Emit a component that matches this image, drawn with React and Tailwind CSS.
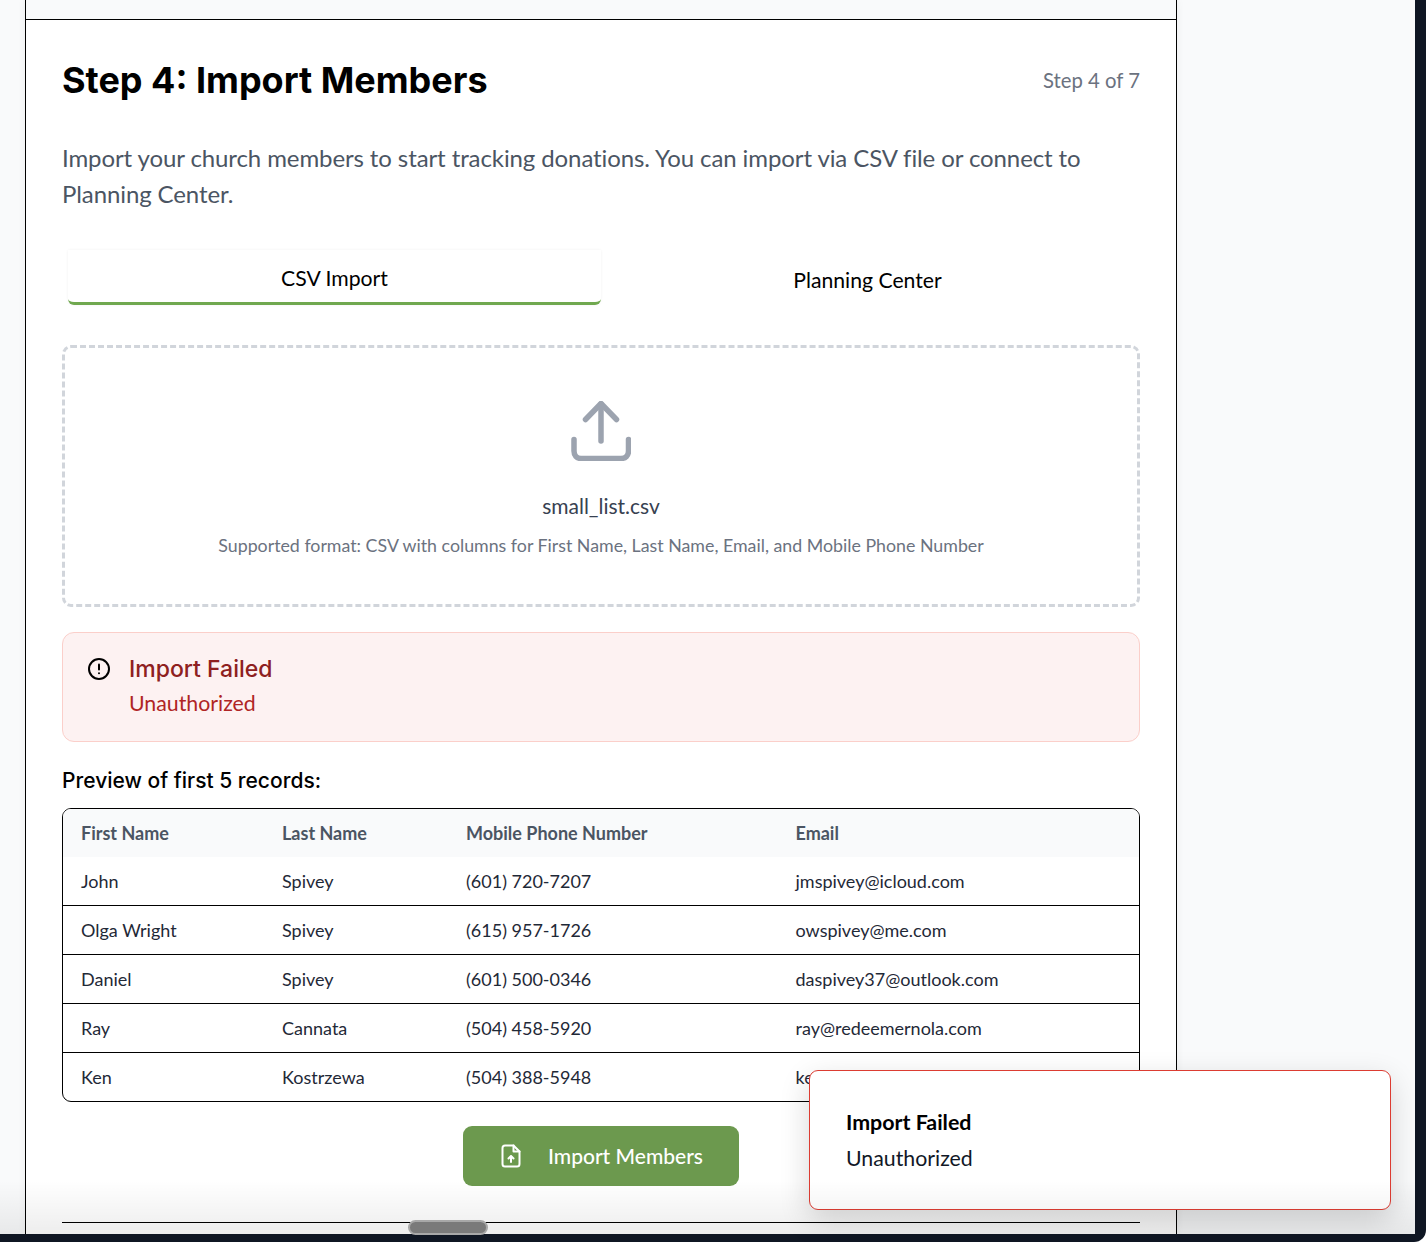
const rows = [
  ["John", "Spivey", "(601) 720-7207", "jmspivey@icloud.com"],
  ["Olga Wright", "Spivey", "(615) 957-1726", "owspivey@me.com"],
  ["Daniel", "Spivey", "(601) 500-0346", "daspivey37@outlook.com"],
  ["Ray", "Cannata", "(504) 458-5920", "ray@redeemernola.com"],
  ["Ken", "Kostrzewa", "(504) 388-5948", "ken@example.com"],
];

function UploadIcon() {
  return (
    <svg width="60" height="60" viewBox="0 0 60 60" fill="none" stroke="#9ca3af" strokeWidth="5.5" strokeLinecap="round" strokeLinejoin="round">
      <path d="M14.5 18.5L30 2.5L45.5 18.5" />
      <path d="M30 3V40" />
      <path d="M3 38.5V50C3 54.5 5.5 57.5 10 57.5H50C54.5 57.5 57.5 54.5 57.5 50V38.5" />
    </svg>
  );
}

function AlertIcon() {
  return (
    <svg width="24" height="24" viewBox="0 0 24 24" fill="none" stroke="#000" strokeWidth="2" strokeLinecap="round">
      <circle cx="12" cy="12" r="10" />
      <path d="M12 7.5V12.5" />
      <path d="M12 16.2V16.3" />
    </svg>
  );
}

function FileIcon() {
  return (
    <svg width="20" height="24" viewBox="0 0 20 24" fill="none" stroke="#fff" strokeWidth="2" strokeLinecap="round" strokeLinejoin="round">
      <path d="M12.5 1.5H4C2.3 1.5 1.5 2.5 1.5 4V20C1.5 21.5 2.3 22.5 4 22.5H16C17.7 22.5 18.5 21.5 18.5 20V7.5L12.5 1.5Z" />
      <path d="M12.5 1.5V7.5H18.5" />
      <path d="M10 18V12.5" />
      <path d="M7.5 14.5L10 12L12.5 14.5" />
    </svg>
  );
}

export default function App() {
  return (
    <div className="relative w-[1426px] h-[1242px] overflow-hidden bg-white font-['Lato',sans-serif]">
      <div className="h-full w-full rounded-br-[12px] bg-[#0f1623]">
        <div className="w-[1415px] h-[1234px] overflow-hidden bg-[#f9fafb] pl-[25px]">
          <div className="w-[1152px] h-[1234px] border-x border-black bg-white shadow-[0_0_8px_rgba(0,0,0,0.06)]">
            <div className="h-5 border-b border-black bg-[#f9fafb]" />
            <div className="px-9 pt-10">
              <div className="flex items-center justify-between h-10">
                <h1 className="font-['Inter',sans-serif] text-[36px] leading-10 font-bold text-black">Step 4: Import Members</h1>
                <span className="text-[20.3px] text-[#6b7280]">Step 4 of 7</span>
              </div>
              <p className="mt-10 text-[24px] leading-9 tracking-[-0.1px] text-[#4b5563]">
                Import your church members to start tracking donations. You can import via CSV file or connect to Planning Center.
              </p>
              <div className="mt-[38px] grid grid-cols-2 gap-0 px-[6px] text-[21.2px] text-black">
                <div className="flex h-[55px] items-center justify-center rounded-b-[6px] border-b-[3px] border-[#70a84f] bg-white pt-[6px] shadow-[0_0_3px_rgba(0,0,0,0.06)]">CSV Import</div>
                <div className="flex h-[55px] items-center justify-center pt-[6px]">Planning Center</div>
              </div>
              <div className="mt-10 flex h-[262px] flex-col items-center rounded-[9px] border-[3px] border-dashed border-[#d1d5db] pt-[53px]">
                <UploadIcon />
                <div className="mt-[31px] text-[21px] leading-7 text-[#374151]">small_list.csv</div>
                <div className="mt-[13px] text-[17.8px] leading-6 text-[#6b7280]">Supported format: CSV with columns for First Name, Last Name, Email, and Mobile Phone Number</div>
              </div>
              <div className="mt-[25px] flex h-[110px] gap-[18px] rounded-[12px] border border-[#fbcfca] bg-[#fdf2f2] pl-6 pt-[22px]">
                <div className="pt-[2px]"><AlertIcon /></div>
                <div>
                  <div className="font-['Inter',sans-serif] text-[23px] leading-7 font-medium text-[#8e2020]">Import Failed</div>
                  <div className="mt-[6px] text-[21.3px] leading-7 text-[#b02525]">Unauthorized</div>
                </div>
              </div>
              <h2 className="mt-[25px] font-['Inter',sans-serif] text-[21px] leading-7 font-medium text-black">Preview of first 5 records:</h2>
              <div className="mt-[13px] overflow-hidden rounded-[9px] border border-black">
                <div className="grid h-12 grid-cols-[201px_184px_329.5px_1fr] items-center bg-[#f9fafb] pl-[18px] text-[18px] font-bold text-[#4b5563]">
                  <span>First Name</span>
                  <span>Last Name</span>
                  <span>Mobile Phone Number</span>
                  <span>Email</span>
                </div>
                {rows.map((r, i) => (
                  <div key={r[0]} className={i < 4
                    ? "grid h-[49px] grid-cols-[201px_184px_329.5px_1fr] items-center border-b border-black pl-[18px] text-[18px] text-[#1f2937]"
                    : "grid h-[48px] grid-cols-[201px_184px_329.5px_1fr] items-center pl-[18px] text-[18px] text-[#1f2937]"}>
                    {r.map((c) => <span key={c}>{c}</span>)}
                  </div>
                ))}
              </div>
              <div className="mt-6 flex justify-center">
                <button className="flex h-[60px] w-[276px] items-center rounded-[9px] bg-[#6c994e] pl-[38px] text-[21px] font-medium text-white">
                  <FileIcon />
                  <span className="ml-[27px]">Import Members</span>
                </button>
              </div>
              <div className="mt-9 h-px bg-black" />
            </div>
          </div>
        </div>
      </div>
      <div className="absolute left-[809px] top-[1070px] flex h-[140px] w-[582px] flex-col justify-center rounded-[9px] border border-[#dc3c32] bg-white pl-9 shadow-[0_10px_30px_rgba(0,0,0,0.16)]">
        <div className="text-[21.4px] leading-9 font-bold text-black">Import Failed</div>
        <div className="text-[21.3px] leading-9 text-[#111827]">Unauthorized</div>
      </div>
      <div className="absolute left-0 top-[1180px] h-[54px] w-[1415px] bg-gradient-to-b from-transparent to-black/[0.07]" />
      <div className="absolute left-[408px] top-[1220px] h-[15px] w-20 rounded-full border-2 border-[#a8a8a8] bg-[#7a7a7a]" />
    </div>
  );
}
